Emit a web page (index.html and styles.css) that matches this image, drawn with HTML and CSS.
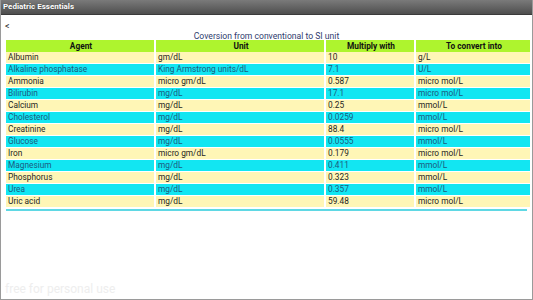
FILE: index.html
```html
<!DOCTYPE html>
<html>
<head>
<meta charset="utf-8">
<link rel="stylesheet" href="styles.css">
</head>
<body>
<div class="frame">
  <div class="titlebar">Pediatric Essentials</div>
  <div class="back">&lt;</div>
  <div class="heading">Coversion from conventional to SI unit</div>
  <table class="conv">
    <thead>
      <tr><th class="c1">Agent</th><th class="c2">Unit</th><th class="c3">Multiply with</th><th class="c4">To convert into</th></tr>
    </thead>
    <tbody>
      <tr class="y"><td>Albumin</td><td>gm/dL</td><td>10</td><td>g/L</td></tr>
      <tr class="b"><td>Alkaline phosphatase</td><td>King Armstrong units/dL</td><td>7.1</td><td>U/L</td></tr>
      <tr class="y"><td>Ammonia</td><td>micro gm/dL</td><td>0.587</td><td>micro mol/L</td></tr>
      <tr class="b"><td>Bilirubin</td><td>mg/dL</td><td>17.1</td><td>micro mol/L</td></tr>
      <tr class="y"><td>Calcium</td><td>mg/dL</td><td>0.25</td><td>mmol/L</td></tr>
      <tr class="b"><td>Cholesterol</td><td>mg/dL</td><td>0.0259</td><td>mmol/L</td></tr>
      <tr class="y"><td>Creatinine</td><td>mg/dL</td><td>88.4</td><td>micro mol/L</td></tr>
      <tr class="b"><td>Glucose</td><td>mg/dL</td><td>0.0555</td><td>mmol/L</td></tr>
      <tr class="y"><td>Iron</td><td>micro gm/dL</td><td>0.179</td><td>micro mol/L</td></tr>
      <tr class="b"><td>Magnesium</td><td>mg/dL</td><td>0.411</td><td>mmol/L</td></tr>
      <tr class="y"><td>Phosphorus</td><td>mg/dL</td><td>0.323</td><td>mmol/L</td></tr>
      <tr class="b"><td>Urea</td><td>mg/dL</td><td>0.357</td><td>mmol/L</td></tr>
      <tr class="y"><td>Uric acid</td><td>mg/dL</td><td>59.48</td><td>micro mol/L</td></tr>
    </tbody>
  </table>
  <div class="rule"></div>
  <div class="spacer"></div>
  <div class="watermark">free for personal use</div>
</div>
</body>
</html>
```

FILE: styles.css
```css
html, body {
  margin: 0;
  padding: 0;
  width: 533px;
  height: 300px;
  overflow: hidden;
  background: #fff;
  font-family: Roboto, "Liberation Sans", sans-serif;
}
.frame {
  box-sizing: border-box;
  width: 533px;
  height: 300px;
  border-left: 1px solid #9a9a9a;
  border-right: 1px solid #9a9a9a;
  border-bottom: 1px solid #9a9a9a;
  display: flex;
  flex-direction: column;
}
.titlebar {
  height: 14px;
  line-height: 14px;
  background: linear-gradient(#7a7a7a, #4e4e4e);
  color: #fff;
  font-size: 8px;
  font-weight: bold;
  padding-left: 2px;
  text-shadow: 0 0 1px #333;
  border-bottom: 1px solid #3a3a3a;
}
.back {
  font-size: 9px;
  color: #222;
  padding-left: 4px;
  height: 9px;
  line-height: 11px;
  margin-top: 6px;
}
.heading {
  text-align: center;
  color: #2f3b6e;
  font-size: 8.6px;
  height: 10px;
  line-height: 12px;
}
.conv {
  margin: 0 4px 0 3px;
  border-collapse: separate;
  border-spacing: 2px 0;
  font-size: 8.3px;
  table-layout: fixed;
  width: calc(100% - 3px);
}
.conv th, .conv td {
  padding: 0 0 0 2px;
  height: 12px;
  line-height: 11px;
  white-space: nowrap;
  text-align: left;
  border-bottom: 1px solid #fff;
  box-sizing: border-box;
}
.conv th {
  background: #aef42e;
  font-weight: bold;
  color: #111;
  text-align: center;
  border-bottom: 0;
}
.conv .c1 { width: 148px; }
.conv .c2 { width: 168px; }
.conv .c3 { width: 88px; }
.y td { background: #fff6b6; color: #1e1e1e; }
.b td { background: #12e6f2; color: #1b5a7e; }
.rule {
  margin: 0 5px 0 5px;
  height: 2px;
  background: #5fd8e4;
  border-top: 1px solid #fff;
}
.spacer { flex: 1; }
.watermark {
  color: #eeeeee;
  font-size: 12px;
  padding-left: 4px;
  height: 17px;
  line-height: 14px;
}
```
